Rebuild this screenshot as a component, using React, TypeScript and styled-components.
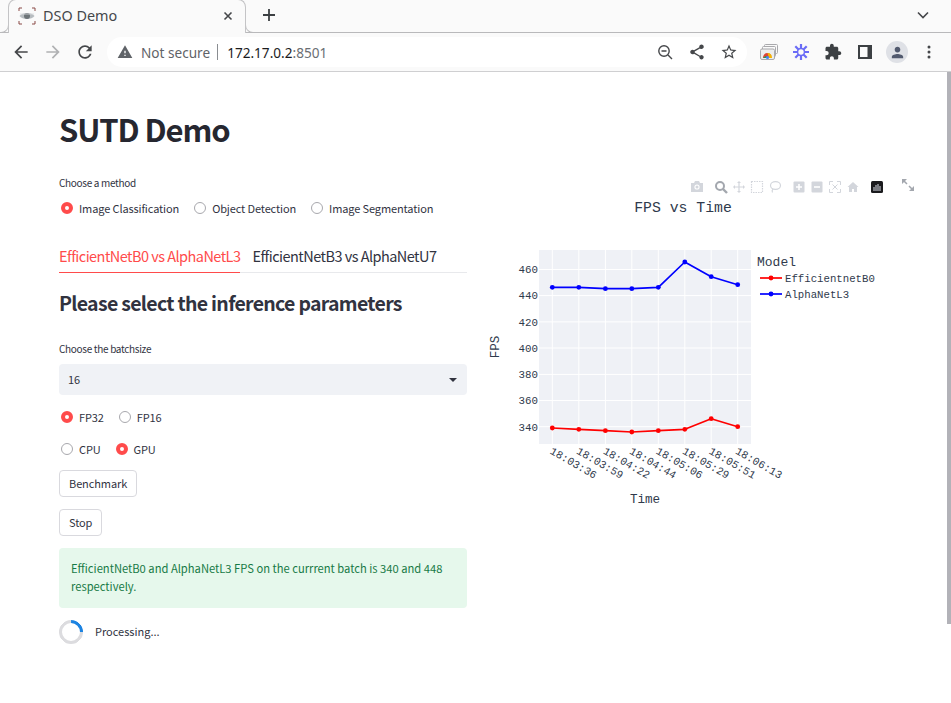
import styled, { createGlobalStyle } from 'styled-components';

const GlobalStyle = createGlobalStyle`
  html, body {
    margin: 0;
    height: 100%;
    overflow: hidden;
    background: #fff;
  }
  * {
    box-sizing: border-box;
  }
`;

const uiFont = `"Noto Sans", "Liberation Sans", sans-serif`;
const pageFont = `"Noto Sans CJK SC", "Noto Sans", sans-serif`;
const chartFont = `"Liberation Mono", monospace`;

const Browser = styled.div`
  width: 951px;
  height: 703px;
  position: relative;
  overflow: hidden;
  display: flex;
  flex-direction: column;
`;

const TabStrip = styled.div`
  height: 33px;
  background: #fafafa;
  border-bottom: 1px solid #b9b9bb;
  display: flex;
  align-items: flex-start;
  padding-left: 8px;
  flex: none;
`;

const Tab = styled.div`
  position: relative;
  width: 238px;
  height: 34px;
  margin-top: -1px;
  background: #fafafa;
  border: 1px solid #c4c4c6;
  border-bottom: none;
  border-radius: 8px 8px 0 0;
  display: flex;
  align-items: center;
  padding: 0 11px 2px 9px;
  font: 14.4px ${uiFont};
  color: #45474a;
  &::before,
  &::after {
    content: '';
    position: absolute;
    bottom: 0;
    width: 8px;
    height: 8px;
    border-bottom: 1px solid #b9b9bb;
  }
  &::before {
    left: -9px;
    border-right: 1px solid #c4c4c6;
    border-bottom-right-radius: 8px;
  }
  &::after {
    right: -9px;
    border-left: 1px solid #c4c4c6;
    border-bottom-left-radius: 8px;
  }
`;

const TabTitle = styled.span`
  flex: 1;
  margin-left: 7px;
`;

const NewTab = styled.div`
  width: 28px;
  height: 30px;
  margin-left: 9px;
  display: flex;
  align-items: center;
  justify-content: center;
`;

const StripEnd = styled.div`
  margin-left: auto;
  width: 56px;
  height: 30px;
  display: flex;
  align-items: center;
  justify-content: center;
`;

const Toolbar = styled.div`
  height: 39px;
  background: #fafafa;
  border-bottom: 1px solid #cfcfd1;
  display: flex;
  align-items: center;
  padding-left: 5px;
  flex: none;
`;

const ToolButton = styled.div`
  width: 32px;
  height: 32px;
  display: flex;
  align-items: center;
  justify-content: center;
  flex: none;
`;

const AddressBar = styled.div`
  width: 640px;
  height: 30px;
  margin: 0 6px;
  border-radius: 15px;
  background: #fff;
  display: flex;
  align-items: center;
  padding-left: 10px;
  font: 13.6px ${uiFont};
`;

const NotSecure = styled.span`
  margin-left: 8px;
  color: #5f6368;
`;

const Divider = styled.span`
  width: 1px;
  height: 16px;
  background: #8a8d91;
  margin: 0 9px 0 7px;
`;

const Host = styled.span`
  color: #1b1c1e;
`;

const Port = styled.span`
  color: #6a6e73;
`;

const AddressActions = styled.div`
  margin-left: auto;
  margin-right: 2px;
  display: flex;
  align-items: center;
`;

const ScrollThumb = styled.div`
  position: absolute;
  top: 72px;
  right: 0;
  width: 4px;
  height: 552px;
  background: #b2b2b8;
`;

const Main = styled.main`
  flex: 1;
  display: grid;
  grid-template-columns: 408px 440px;
  column-gap: 14px;
  align-items: start;
  padding-left: 59px;
  background: #fff;
  font-family: ${pageFont};
  color: #31333f;
`;

const LeftColumn = styled.div`
  display: flex;
  flex-direction: column;
`;

const Title = styled.h1`
  margin: 34px 0 0;
  font-size: 31px;
  letter-spacing: -1.1px;
  line-height: 46px;
  font-weight: 700;
  color: #262730;
`;

const FieldLabel = styled.div<{ $top: number }>`
  margin-top: ${(p) => p.$top}px;
  font-size: 10px;
  letter-spacing: -0.32px;
  line-height: 14px;
  color: #31333f;
`;

const RadioRow = styled.div<{ $top: number; $gap: number }>`
  display: flex;
  gap: ${(p) => p.$gap}px;
  margin-top: ${(p) => p.$top}px;
  padding-left: 2px;
  height: 18px;
  align-items: center;
`;

const RadioOption = styled.label`
  display: flex;
  align-items: center;
  gap: 6px;
  font-size: 11px;
  letter-spacing: -0.12px;
  line-height: 18px;
  white-space: nowrap;
`;

const RadioDot = styled.span<{ $on?: boolean }>`
  width: 12px;
  height: 12px;
  border-radius: 50%;
  background: #fff;
  border: ${(p) => (p.$on ? '4px solid #ff4b4b' : '1.5px solid #a8a8ad')};
  flex: none;
`;

const Tabs = styled.div`
  margin-top: 23px;
  height: 33px;
  display: flex;
  gap: 12px;
  border-bottom: 1px solid #e8e9ec;
`;

const TabLabel = styled.div<{ $active?: boolean }>`
  height: 33px;
  font-size: 14.5px;
  letter-spacing: -0.54px;
  line-height: 31px;
  white-space: nowrap;
  color: ${(p) => (p.$active ? '#ff4b4b' : '#31333f')};
  border-bottom: ${(p) => (p.$active ? '1px solid #ff4b4b' : 'none')};
`;

const SectionTitle = styled.h2`
  margin: 15px 0 0;
  font-size: 19.5px;
  letter-spacing: -0.7px;
  line-height: 30px;
  font-weight: 700;
  white-space: nowrap;
  color: #31333f;
`;

const Select = styled.div`
  margin-top: 8px;
  height: 31px;
  border-radius: 4px;
  background: #f0f2f6;
  display: flex;
  align-items: center;
  justify-content: space-between;
  padding: 0 10px 2px 9px;
  font-size: 11px;
`;

const Caret = styled.span`
  width: 0;
  height: 0;
  margin-top: 2px;
  border-left: 4px solid transparent;
  border-right: 4px solid transparent;
  border-top: 4px solid #31333f;
`;

const ActionButton = styled.button<{ $top: number }>`
  align-self: flex-start;
  margin-top: ${(p) => p.$top}px;
  height: 27px;
  padding: 0 9px 2px;
  background: #fff;
  border: 1px solid #d9d9de;
  border-radius: 4px;
  font-family: inherit;
  font-size: 11px;
  letter-spacing: -0.1px;
  color: #31333f;
`;

const SuccessBox = styled.div`
  margin-top: 12px;
  height: 60px;
  padding: 11px 12px;
  border-radius: 4px;
  background: #e6f8ec;
  color: #177a46;
  font-size: 11.2px;
  line-height: 18px;
`;

const Progress = styled.div`
  margin-top: 12px;
  display: flex;
  align-items: center;
  gap: 12px;
  font-size: 11px;
`;

const ProgressText = styled.span`
  margin-bottom: 2px;
`;

const Spinner = styled.div`
  width: 24px;
  height: 24px;
  border-radius: 50%;
  border: 3px solid #dcdcdf;
  border-top-color: #1c83e1;
  transform: rotate(45deg);
`;

const ChartBox = styled.div`
  position: relative;
  margin-top: 98px;
  height: 340px;
`;

const ChartSvg = styled.svg`
  display: block;
  width: 440px;
  height: 340px;
`;

const ModeBar = styled.div`
  position: absolute;
  top: 8px;
  left: 207px;
  display: flex;
  align-items: center;
`;

const ModeIcon = styled.svg<{ $gapAfter?: number }>`
  width: 18px;
  height: 18px;
  flex: none;
  margin-right: ${(p) => p.$gapAfter ?? 0}px;
`;

const FullScreen = styled.svg`
  position: absolute;
  top: 8px;
  left: 420px;
  width: 14px;
  height: 14px;
`;

const CHART_TEXT = '#2f3a4c';

const xTicks = ['18:03:36', '18:03:59', '18:04:22', '18:04:44', '18:05:06', '18:05:29', '18:05:51', '18:06:13'];
const xPos = [552.3, 578.8, 605.4, 631.8, 658.3, 684.8, 711.2, 737.7];
const yTicks = [
  { label: '460', y: 269.5 },
  { label: '440', y: 295.6 },
  { label: '420', y: 321.9 },
  { label: '400', y: 348 },
  { label: '380', y: 374.4 },
  { label: '360', y: 400.5 },
  { label: '340', y: 426.7 },
];
const blue = [287.3, 287.3, 288.7, 288.7, 287.3, 262, 276.7, 284.7];
const red = [428, 429.3, 430.7, 432, 430.7, 429.3, 418.7, 426.7];

const toPoints = (ys: number[]) => ys.map((y, i) => `${xPos[i]},${y}`).join(' ');

const Series = ({ ys, color }: { ys: number[]; color: string }) => (
  <g>
    <polyline points={toPoints(ys)} fill="none" stroke={color} strokeWidth="1.7" strokeLinejoin="round" />
    {ys.map((y, i) => (
      <circle key={i} cx={xPos[i]} cy={y} r="2.4" fill={color} />
    ))}
  </g>
);

const Chart = () => (
  <ChartSvg viewBox="481 170 440 340" fontFamily={chartFont}>
    <text x="683" y="212" textAnchor="middle" fontSize="14.8" fill={CHART_TEXT}>
      FPS vs Time
    </text>
    <rect x="539" y="250" width="212" height="194" fill="#eff1f6" />
    {xPos.map((x) => (
      <line key={x} x1={x} x2={x} y1="250" y2="444" stroke="#fff" strokeWidth="1" />
    ))}
    {yTicks.map((t) => (
      <line key={t.label} x1="539" x2="751" y1={t.y} y2={t.y} stroke="#fff" strokeWidth="1" />
    ))}
    {yTicks.map((t) => (
      <text key={t.label} x="538" y={t.y + 3.8} textAnchor="end" fontSize="10.8" fill={CHART_TEXT}>
        {t.label}
      </text>
    ))}
    {xTicks.map((t, i) => (
      <text
        key={t}
        x={xPos[i] - 3}
        y="453"
        fontSize="10.8"
        fill={CHART_TEXT}
        transform={`rotate(30 ${xPos[i] - 3} 453)`}
      >
        {t}
      </text>
    ))}
    <Series ys={red} color="#ff0000" />
    <Series ys={blue} color="#0000ff" />
    <text x="645" y="503" textAnchor="middle" fontSize="12.6" fill={CHART_TEXT}>
      Time
    </text>
    <text x="499" y="347" textAnchor="middle" fontSize="12.6" fill={CHART_TEXT} transform="rotate(-90 499 347)">
      FPS
    </text>
    <text x="757" y="266" fontSize="13" fill={CHART_TEXT}>
      Model
    </text>
    <line x1="760" x2="782" y1="278" y2="278" stroke="#ff0000" strokeWidth="1.7" />
    <circle cx="771" cy="278" r="2.4" fill="#ff0000" />
    <text x="785" y="282" fontSize="10.7" fill={CHART_TEXT}>
      EfficientnetB0
    </text>
    <line x1="760" x2="782" y1="294" y2="294" stroke="#0000ff" strokeWidth="1.7" />
    <circle cx="771" cy="294" r="2.4" fill="#0000ff" />
    <text x="785" y="298" fontSize="10.7" fill={CHART_TEXT}>
      AlphaNetL3
    </text>
  </ChartSvg>
);

const MODE_GREY = '#d3d6dc';

const ModeBarIcons = () => (
  <ModeBar>
    <ModeIcon viewBox="0 0 18 18" $gapAfter={6}>
      <path d="M3 5h3l1-2h4l1 2h3v9H3z" fill={MODE_GREY} />
      <circle cx="9" cy="9" r="2.6" fill="#fff" />
      <circle cx="9" cy="9" r="1.5" fill={MODE_GREY} />
    </ModeIcon>
    <ModeIcon viewBox="0 0 18 18">
      <circle cx="8" cy="8" r="4" fill="none" stroke="#a3a7ae" strokeWidth="2" />
      <path d="M11 11l4 4" stroke="#a3a7ae" strokeWidth="2.4" />
    </ModeIcon>
    <ModeIcon viewBox="0 0 18 18">
      <path
        d="M9 3l2 2H9.600v3.400H13V7l2 2-2 2V9.600H9.600V13H11l-2 2-2-2h1.400V9.600H5V11L3 9l2-2v1.400h3.400V5H7z"
        fill={MODE_GREY}
      />
    </ModeIcon>
    <ModeIcon viewBox="0 0 18 18">
      <rect x="3.500" y="3.500" width="11" height="11" fill="none" stroke={MODE_GREY} strokeWidth="1.200" strokeDasharray="1.500 1" />
    </ModeIcon>
    <ModeIcon viewBox="0 0 18 18" $gapAfter={6}>
      <ellipse cx="9.500" cy="7.500" rx="5" ry="3.800" fill="none" stroke={MODE_GREY} strokeWidth="1.200" />
      <path d="M7 11c-1 1-1 2.500-.5 3.500" fill="none" stroke={MODE_GREY} strokeWidth="1.200" />
    </ModeIcon>
    <ModeIcon viewBox="0 0 18 18">
      <rect x="3.500" y="3.500" width="11" height="11" rx="1" fill={MODE_GREY} />
      <path d="M9 6v6M6 9h6" stroke="#fff" strokeWidth="1.600" />
    </ModeIcon>
    <ModeIcon viewBox="0 0 18 18">
      <rect x="3.500" y="3.500" width="11" height="11" rx="1" fill={MODE_GREY} />
      <path d="M6 9h6" stroke="#fff" strokeWidth="1.600" />
    </ModeIcon>
    <ModeIcon viewBox="0 0 18 18">
      <path d="M3.500 7V3.500H7M11 3.500h3.500V7M14.500 11v3.500H11M7 14.500H3.500V11" fill="none" stroke={MODE_GREY} strokeWidth="1" />
      <path d="M6.500 6.500l5 5M11.500 6.500l-5 5" stroke={MODE_GREY} strokeWidth="1" />
    </ModeIcon>
    <ModeIcon viewBox="0 0 18 18" $gapAfter={6}>
      <path d="M9 4l5.500 5H13v5h-3v-3H8v3H5V9H3.500z" fill={MODE_GREY} />
    </ModeIcon>
    <ModeIcon viewBox="0 0 18 18">
      <rect x="3" y="3" width="12" height="12" rx="1.500" fill="#1a1a1d" />
      <path d="M6 13V9M8 13V7M10 13V6M12 13V8" stroke="#c9ccd4" strokeWidth="1.100" />
    </ModeIcon>
  </ModeBar>
);

const iconProps = { width: 20, height: 20, viewBox: '0 0 24 24' };

const Favicon = () => (
  <svg width="18" height="18" viewBox="0 0 18 18">
    <path d="M1 4V1h3M14 1h3v3M17 14v3h-3M4 17H1v-3" fill="none" stroke="#8a4a46" strokeWidth="1" />
    <path d="M1.500 9C4 5 14 5 16.500 9 14 13 4 13 1.500 9z" fill="#b7bcc0" />
    <circle cx="9" cy="9" r="3" fill="#6d7478" />
    <path d="M2 7h14" stroke="#d9dcde" strokeWidth="0.800" />
  </svg>
);

const CastIcon = () => (
  <svg width="18" height="16" viewBox="0 0 18 16">
    <rect x="4.500" y="0.500" width="13" height="9" rx="1" fill="#fafafa" stroke="#a9a9ac" />
    <rect x="2.500" y="2.500" width="13" height="10" rx="1" fill="#fafafa" stroke="#a9a9ac" />
    <rect x="0.500" y="5" width="14" height="10.500" rx="1.500" fill="#eceded" stroke="#a9a9ac" />
    <path d="M3 14a4.500 4.500 0 0 1 4.500-5 4.500 4.500 0 0 1 4 2.500L7.500 14z" fill="#db4437" />
    <path d="M7.500 9a4.500 4.500 0 0 1 4.500 5H9z" fill="#f4b400" />
    <path d="M3 14l3-2 2 2z" fill="#0f9d58" />
    <circle cx="7.500" cy="13.500" r="1.600" fill="#4285f4" />
  </svg>
);

const BurstIcon = () => (
  <svg width="18" height="18" viewBox="0 0 18 18">
    <g stroke="#6a6cf6" strokeWidth="2.200">
      <path d="M9 1v16M1 9h16M3.300 3.300l11.400 11.400M14.700 3.300L3.300 14.700" />
    </g>
    <circle cx="9" cy="9" r="4.200" fill="#6a6cf6" />
    <circle cx="9" cy="9" r="2.700" fill="#fafafa" />
  </svg>
);

const Avatar = styled.div`
  width: 22px;
  height: 22px;
  border-radius: 50%;
  background: #dfe1e6;
  display: flex;
  align-items: center;
  justify-content: center;
`;

const BrowserChrome = () => (
  <>
    <TabStrip>
      <Tab>
        <Favicon />
        <TabTitle>DSO Demo</TabTitle>
        <svg width="12" height="12" viewBox="0 0 12 12">
          <path d="M2.500 2.500l7 7M9.500 2.500l-7 7" stroke="#45474a" strokeWidth="1.600" />
        </svg>
      </Tab>
      <NewTab>
        <svg width="14" height="14" viewBox="0 0 14 14">
          <path d="M7 1v12M1 7h12" stroke="#3c4043" strokeWidth="1.800" />
        </svg>
      </NewTab>
      <StripEnd>
        <svg width="12" height="8" viewBox="0 0 12 8">
          <path d="M1 1.500l5 5 5-5" fill="none" stroke="#45474a" strokeWidth="1.600" />
        </svg>
      </StripEnd>
    </TabStrip>
    <Toolbar>
      <ToolButton>
        <svg {...iconProps}>
          <path fill="#45474a" d="M20 11H7.830l5.590-5.590L12 4l-8 8 8 8 1.410-1.410L7.830 13H20v-2z" />
        </svg>
      </ToolButton>
      <ToolButton>
        <svg {...iconProps}>
          <path fill="#b0b1b3" d="M12 4l-1.410 1.410L16.170 11H4v2h12.170l-5.580 5.590L12 20l8-8z" />
        </svg>
      </ToolButton>
      <ToolButton>
        <svg {...iconProps}>
          <path
            fill="#45474a"
            d="M17.650 6.350C16.200 4.900 14.210 4 12 4c-4.420 0-7.990 3.580-7.990 8s3.570 8 7.990 8c3.730 0 6.840-2.550 7.730-6h-2.080c-.82 2.330-3.040 4-5.650 4-3.310 0-6-2.690-6-6s2.690-6 6-6c1.660 0 3.140.69 4.220 1.780L13 11h7V4l-2.350 2.350z"
          />
        </svg>
      </ToolButton>
      <AddressBar>
        <svg width="16" height="16" viewBox="0 0 24 24">
          <path fill="#5f6368" d="M1 21h22L12 2 1 21zm12-3h-2v-2h2v2zm0-4h-2v-4h2v4z" />
        </svg>
        <NotSecure>Not secure</NotSecure>
        <Divider />
        <Host>172.17.0.2</Host>
        <Port>:8501</Port>
        <AddressActions>
          <ToolButton>
            <svg width="18" height="18" viewBox="0 0 18 18">
              <circle cx="8" cy="8" r="5.200" fill="none" stroke="#45474a" strokeWidth="1.400" />
              <path d="M5.500 8h5M12 12l4 4" stroke="#45474a" strokeWidth="1.400" />
            </svg>
          </ToolButton>
          <ToolButton>
            <svg width="18" height="18" viewBox="0 0 24 24">
              <path
                fill="#45474a"
                d="M18 16.080c-.76 0-1.440.3-1.960.77L8.910 12.700c.05-.23.09-.46.09-.7s-.04-.47-.09-.7l7.050-4.110c.54.5 1.250.81 2.040.81 1.660 0 3-1.340 3-3s-1.340-3-3-3-3 1.340-3 3c0 .24.04.47.09.7L8.040 9.810C7.500 9.310 6.790 9 6 9c-1.660 0-3 1.340-3 3s1.340 3 3 3c.79 0 1.500-.31 2.040-.81l7.120 4.160c-.05.21-.08.43-.08.65 0 1.610 1.310 2.920 2.920 2.920s2.920-1.310 2.920-2.920-1.310-2.920-2.920-2.920z"
              />
            </svg>
          </ToolButton>
          <ToolButton>
            <svg width="18" height="18" viewBox="0 0 24 24">
              <path
                fill="#45474a"
                d="M22 9.240l-7.190-.62L12 2 9.190 8.630 2 9.240l5.460 4.730L5.820 21 12 17.270 18.180 21l-1.630-7.030L22 9.240zM12 15.400l-3.760 2.270 1-4.280-3.320-2.880 4.380-.38L12 6.100l1.710 4.040 4.380.38-3.320 2.880 1 4.280L12 15.400z"
              />
            </svg>
          </ToolButton>
        </AddressActions>
      </AddressBar>
      <ToolButton>
        <CastIcon />
      </ToolButton>
      <ToolButton>
        <BurstIcon />
      </ToolButton>
      <ToolButton>
        <svg width="18" height="18" viewBox="0 0 24 24">
          <path
            fill="#3c4043"
            d="M20.500 11H19V7c0-1.100-.9-2-2-2h-4V3.500C13 2.120 11.880 1 10.500 1S8 2.120 8 3.500V5H4c-1.100 0-1.990.9-1.990 2v3.800H3.500c1.490 0 2.700 1.210 2.700 2.700s-1.210 2.700-2.700 2.700H2V20c0 1.100.9 2 2 2h3.800v-1.500c0-1.490 1.210-2.700 2.700-2.700 1.490 0 2.700 1.210 2.700 2.700V22H17c1.100 0 2-.9 2-2v-4h1.500c1.380 0 2.500-1.120 2.500-2.500S21.880 11 20.500 11z"
          />
        </svg>
      </ToolButton>
      <ToolButton>
        <svg width="14" height="14" viewBox="0 0 14 14">
          <path fill="#3c4043" fillRule="evenodd" d="M0 0h14v14H0zM2 2v10h7.500V2z" />
        </svg>
      </ToolButton>
      <ToolButton>
        <Avatar>
          <svg width="17" height="17" viewBox="0 0 24 24">
            <path
              fill="#525a6e"
              d="M12 12c2.210 0 4-1.790 4-4s-1.790-4-4-4-4 1.790-4 4 1.790 4 4 4zm0 2c-2.670 0-8 1.340-8 4v2h16v-2c0-2.660-5.330-4-8-4z"
            />
          </svg>
        </Avatar>
      </ToolButton>
      <ToolButton>
        <svg width="4" height="14" viewBox="0 0 4 14">
          <g fill="#45474a">
            <circle cx="2" cy="2" r="1.500" />
            <circle cx="2" cy="7" r="1.500" />
            <circle cx="2" cy="12" r="1.500" />
          </g>
        </svg>
      </ToolButton>
    </Toolbar>
  </>
);

const App = () => {
  return (
    <Browser>
      <GlobalStyle />
      <BrowserChrome />
      <Main>
        <LeftColumn>
          <Title>SUTD Demo</Title>
          <FieldLabel $top={24}>Choose a method</FieldLabel>
          <RadioRow $top={9} $gap={15}>
            <RadioOption>
              <RadioDot $on />
              Image Classification
            </RadioOption>
            <RadioOption>
              <RadioDot />
              Object Detection
            </RadioOption>
            <RadioOption>
              <RadioDot />
              Image Segmentation
            </RadioOption>
          </RadioRow>
          <Tabs>
            <TabLabel $active>EfficientNetB0 vs AlphaNetL3</TabLabel>
            <TabLabel>EfficientNetB3 vs AlphaNetU7</TabLabel>
          </Tabs>
          <SectionTitle>Please select the inference parameters</SectionTitle>
          <FieldLabel $top={24}>Choose the batchsize</FieldLabel>
          <Select>
            16
            <Caret />
          </Select>
          <RadioRow $top={13} $gap={15}>
            <RadioOption>
              <RadioDot $on />
              FP32
            </RadioOption>
            <RadioOption>
              <RadioDot />
              FP16
            </RadioOption>
          </RadioRow>
          <RadioRow $top={14} $gap={15}>
            <RadioOption>
              <RadioDot />
              CPU
            </RadioOption>
            <RadioOption>
              <RadioDot $on />
              GPU
            </RadioOption>
          </RadioRow>
          <ActionButton $top={12}>Benchmark</ActionButton>
          <ActionButton $top={12}>Stop</ActionButton>
          <SuccessBox>
            EfficientNetB0 and AlphaNetL3 FPS on the currrent batch is 340 and 448 respectively.
          </SuccessBox>
          <Progress>
            <Spinner />
            <ProgressText>Processing...</ProgressText>
          </Progress>
        </LeftColumn>
        <ChartBox>
          <Chart />
          <ModeBarIcons />
          <FullScreen viewBox="0 0 14 14">
            <path d="M1 1h5L1 6zM13 13H8l5-5z" fill="#a3a7ae" />
            <path d="M3 3l3 3M11 11L8 8" stroke="#a3a7ae" strokeWidth="1.500" />
          </FullScreen>
        </ChartBox>
      </Main>
      <ScrollThumb />
    </Browser>
  );
};

export default App;
